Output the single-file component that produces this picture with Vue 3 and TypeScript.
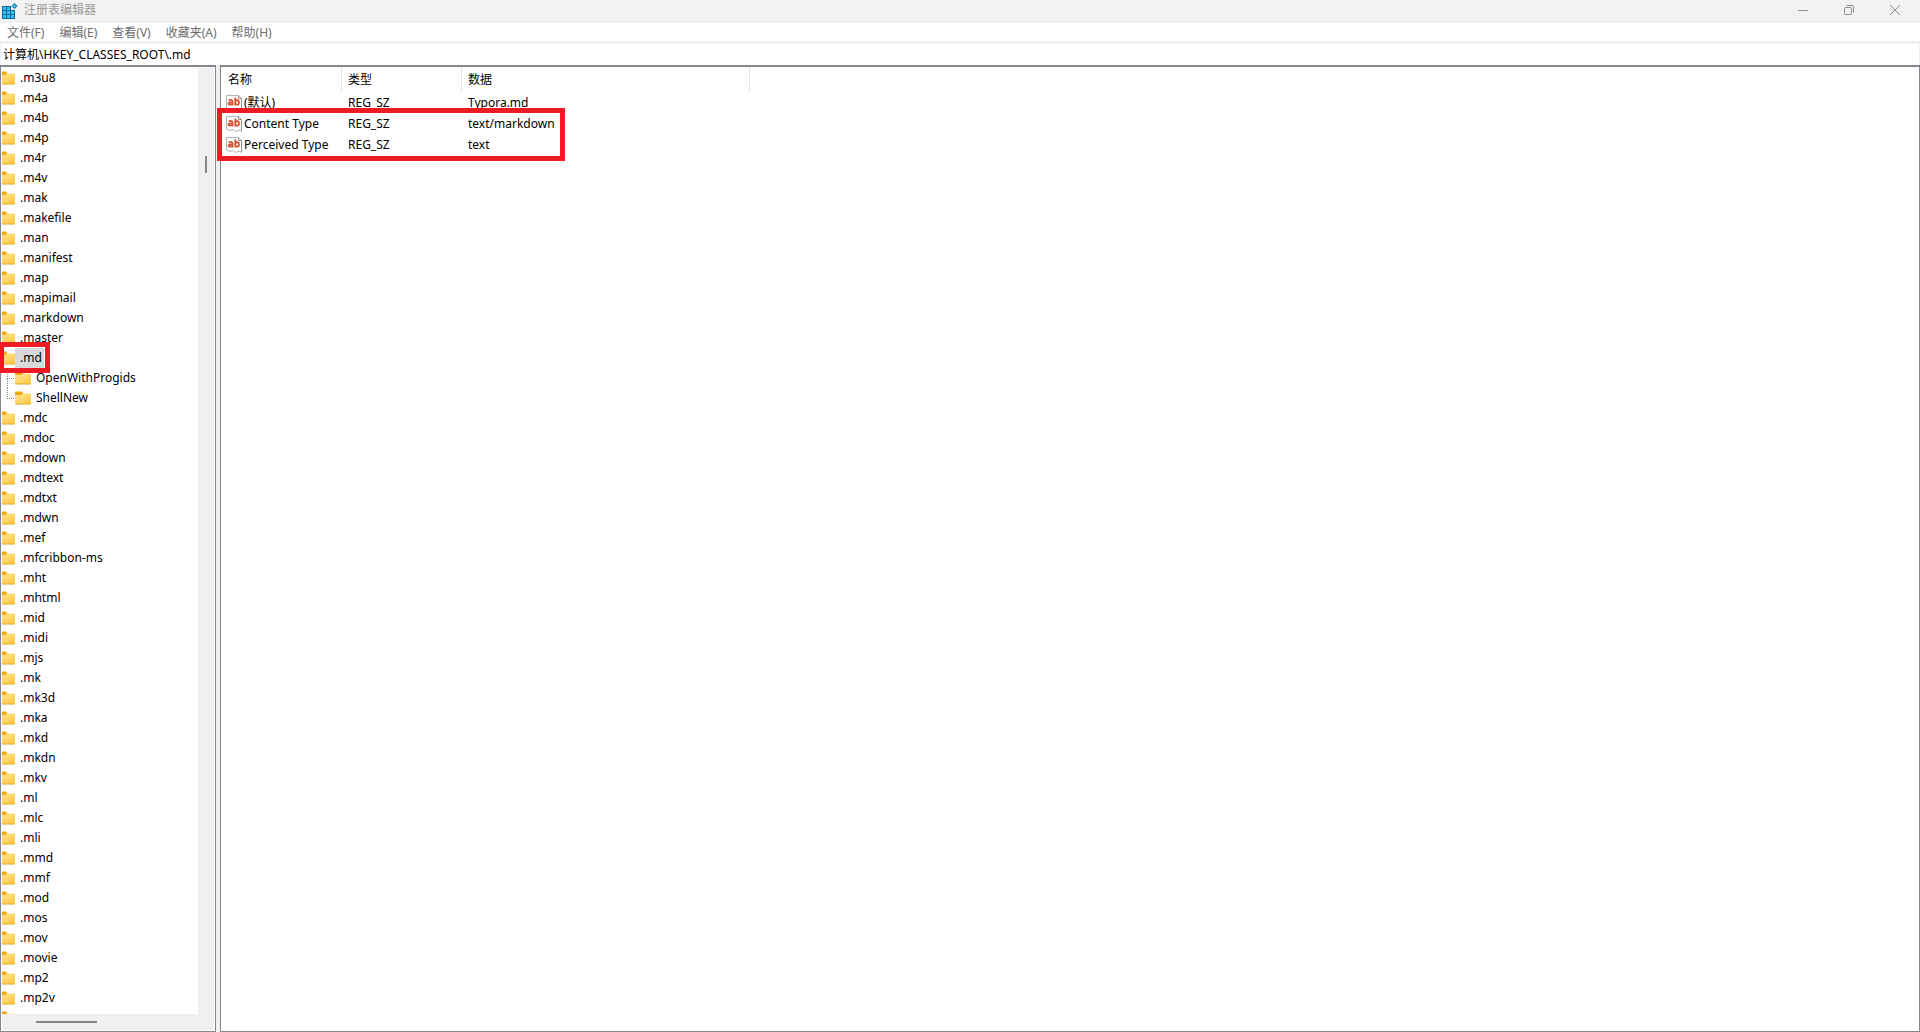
<script setup lang="ts">
import { ref } from 'vue'

interface TreeKey {
  name: string
  children?: string[]
}

interface RegValue {
  name: string
  type: string
  data: string
}

const title = '注册表编辑器'
const menus = ['文件(F)', '编辑(E)', '查看(V)', '收藏夹(A)', '帮助(H)']
const path = ref('计算机\\HKEY_CLASSES_ROOT\\.md')
const selected = ref('.md')

const names = [
  '.m3u8', '.m4a', '.m4b', '.m4p', '.m4r', '.m4v', '.mak', '.makefile', '.man', '.manifest',
  '.map', '.mapimail', '.markdown', '.master', '.md', '.mdc', '.mdoc', '.mdown', '.mdtext',
  '.mdtxt', '.mdwn', '.mef', '.mfcribbon-ms', '.mht', '.mhtml', '.mid', '.midi', '.mjs', '.mk',
  '.mk3d', '.mka', '.mkd', '.mkdn', '.mkv', '.ml', '.mlc', '.mli', '.mmd', '.mmf', '.mod',
  '.mos', '.mov', '.movie', '.mp2', '.mp2v',
]
const keys: TreeKey[] = names.map((name) =>
  name === '.md' ? { name, children: ['OpenWithProgids', 'ShellNew'] } : { name },
)

const columns = ['名称', '类型', '数据']
const values: RegValue[] = [
  { name: '(默认)', type: 'REG_SZ', data: 'Typora.md' },
  { name: 'Content Type', type: 'REG_SZ', data: 'text/markdown' },
  { name: 'Perceived Type', type: 'REG_SZ', data: 'text' },
]
</script>

<template>
  <div class="window">
    <svg class="defs" width="0" height="0" aria-hidden="true">
      <defs>
        <linearGradient id="folder-fill" x1="0" y1="0" x2="1" y2="1">
          <stop offset="0" stop-color="#ffe59a" />
          <stop offset="1" stop-color="#ffc93c" />
        </linearGradient>
        <symbol id="folder" viewBox="0 0 16 14">
          <path d="M0 1.5Q0 .5 1 .5H7L8 1.5V5H0Z" fill="#f0a90c" />
          <path d="M0 4H6L8 2.5H15Q16 2.5 16 3.5V13H0Z" fill="url(#folder-fill)" />
          <path d="M0 12.5H16Q16 13.5 15 13.5H1Q0 13.5 0 12.5Z" fill="#e9a520" />
        </symbol>
      </defs>
    </svg>

    <header class="titlebar">
      <svg class="app-icon" viewBox="0 0 16 16" aria-hidden="true">
        <path d="M0 3H9V7H13V16H0Z" fill="#0b6a9e" />
        <path d="M1 4H4V7H1ZM5 4H8V7H5ZM1 8H4V11H1ZM5 8H8V11H5ZM9 8H12V11H9ZM1 12H4V15H1ZM5 12H8V15H5ZM9 12H12V15H9Z" fill="#35bdf0" />
        <path d="M12.500 0L15.500 3L12.500 6L9.500 3Z" fill="#0f7fb8" />
        <path d="M12.500 1.500L14 3L12.500 4.500L11 3Z" fill="#4fc8f2" />
      </svg>
      <h1>{{ title }}</h1>
      <div class="controls">
        <button type="button" aria-label="最小化">
          <svg viewBox="0 0 10 10"><path d="M0 5.5H10" /></svg>
        </button>
        <button type="button" aria-label="还原">
          <svg viewBox="0 0 10 10">
            <rect x=".5" y="2.500" width="7" height="7" rx="1" />
            <path d="M2.500 .5H8Q9.500 .5 9.500 2V7.500" />
          </svg>
        </button>
        <button type="button" aria-label="关闭">
          <svg viewBox="0 0 10 10"><path d="M0 0L10 10M10 0L0 10" /></svg>
        </button>
      </div>
    </header>

    <nav class="menubar">
      <button v-for="menu in menus" :key="menu" type="button">{{ menu }}</button>
    </nav>

    <div class="address">
      <input v-model="path" type="text" aria-label="地址" spellcheck="false" />
    </div>

    <main class="panes">
      <section class="tree-pane">
        <div class="tree-row">
          <ul class="tree">
            <li v-for="key in keys" :key="key.name">
              <div class="key" @click="selected = key.name">
                <svg class="folder-cut" viewBox="3 0 13 14" aria-hidden="true">
                  <use href="#folder" width="16" height="14" />
                </svg>
                <span class="label" :class="{ selected: key.name === selected }">{{ key.name }}</span>
                <span v-if="key.children" class="key-mark"></span>
              </div>
              <ul v-if="key.children" class="subtree">
                <li v-for="child in key.children" :key="child" class="key child">
                  <svg class="folder-full" viewBox="0 0 16 14" aria-hidden="true">
                    <use href="#folder" width="16" height="14" />
                  </svg>
                  <span class="label">{{ child }}</span>
                </li>
              </ul>
            </li>
            <li class="key" aria-hidden="true">
              <svg class="folder-cut" viewBox="3 0 13 14">
                <use href="#folder" width="16" height="14" />
              </svg>
            </li>
          </ul>
          <div class="vscroll"><span class="thumb"></span></div>
        </div>
        <div class="hscroll"><span class="thumb"></span></div>
      </section>

      <section class="values-pane">
        <table>
          <thead>
            <tr>
              <th v-for="column in columns" :key="column" scope="col">{{ column }}</th>
            </tr>
          </thead>
          <tbody>
            <tr v-for="value in values" :key="value.name">
              <td>
                <span class="value-name">
                  <svg class="value-icon" viewBox="0 0 16 16" aria-hidden="true">
                    <path d="M.5 .5H12.500L15.500 3.500V15.500L13 14L10 15.500L7 13.500L4 14.500L.5 13Z" fill="#fff" stroke="#b4b4b4" />
                    <path d="M12.500 .5V3.500H15.500V15" fill="none" stroke="#909090" />
                    <g fill="none" stroke="#d4512b" stroke-width="1.800">
                      <path d="M2.500 5.500Q6.500 4 6.500 6.500V10.500M6.500 7.500Q2.500 7.200 2.500 8.800Q3 10.500 6.500 9" />
                      <path d="M9.300 2.500V10.500M9.300 6Q13 4 13 7.300Q13 11 9.300 9" />
                    </g>
                  </svg>
                  {{ value.name }}
                </span>
              </td>
              <td>{{ value.type }}</td>
              <td>{{ value.data }}</td>
            </tr>
          </tbody>
        </table>
        <span class="values-mark"></span>
      </section>
    </main>
  </div>
</template>

<style>
html,
body {
  margin: 0;
  background: #fff;
}
</style>

<style scoped>
.window {
  display: flex;
  flex-direction: column;
  height: 100vh;
  overflow: hidden;
  background: #f0f0f0;
  color: #000;
  font: 12px/20px "Noto Sans", "Noto Sans CJK SC", sans-serif;
}

.defs {
  position: absolute;
}

button {
  border: 0;
  background: none;
  font: inherit;
}

ul {
  margin: 0;
  padding: 0;
  list-style: none;
}

.titlebar {
  display: flex;
  align-items: flex-start;
  flex: none;
  height: 23px;
  padding-right: 2px;
  background: #f2f2f2;
  box-sizing: border-box;
}

.app-icon {
  width: 16px;
  height: 16px;
  margin: 3px 6px 0 2px;
}

h1 {
  flex: 1;
  margin: 0;
  font-size: 12px;
  font-weight: 400;
  line-height: 20px;
  color: #999;
}

.controls {
  display: flex;
  height: 20px;
}

.controls button {
  display: grid;
  place-items: center;
  width: 46px;
  padding: 0;
}

.controls svg {
  width: 10px;
  height: 10px;
  overflow: visible;
  fill: none;
  stroke: #8c8c8c;
}

.menubar {
  display: flex;
  flex: none;
  gap: 15px;
  height: 18px;
  padding-left: 7px;
  background: #fff;
}

.menubar button {
  padding: 0;
  line-height: 20px;
  color: #6d6d6d;
}

.address {
  flex: none;
  padding: 3px 1px 0;
}

.address input {
  display: block;
  box-sizing: border-box;
  width: 100%;
  height: 21px;
  padding: 0 2px 2px;
  border: 0;
  background: #fff;
  color: #000;
  font: inherit;
  outline: 0;
}

.panes {
  display: flex;
  flex: 1;
  gap: 4px;
  min-height: 0;
}

.tree-pane,
.values-pane {
  border: 1px solid #828790;
  border-top-width: 2px;
  background: #fff;
}

.tree-pane {
  display: flex;
  flex-direction: column;
  box-sizing: border-box;
  flex: none;
  width: 216px;
  padding: 1px;
}

.tree-row {
  display: flex;
  flex: 1;
  min-height: 0;
}

.tree {
  flex: 1;
  overflow-x: visible;
  overflow-y: clip;
}

.key {
  display: flex;
  align-items: center;
  position: relative;
  height: 20px;
}

.folder-cut {
  width: 13px;
  height: 14px;
}

.folder-full {
  width: 16px;
  height: 14px;
}

.label {
  padding: 0 2px 0 5px;
}

.selected {
  background: #d9d9d9;
}

.key-mark {
  position: absolute;
  top: -6px;
  left: -3px;
  box-sizing: border-box;
  width: 51px;
  height: 31px;
  border: 5px solid #ed1c24;
  z-index: 1;
}

.child {
  padding-left: 13px;
}

.child::before {
  content: "";
  position: absolute;
  top: 0;
  left: 5px;
  width: 6px;
  height: 10px;
  border-left: 1px dotted #909090;
  border-bottom: 1px dotted #909090;
}

.child:not(:last-child)::after {
  content: "";
  position: absolute;
  top: 10px;
  left: 5px;
  height: 10px;
  border-left: 1px dotted #909090;
}

.vscroll {
  width: 16px;
  background: #f0f0f0;
}

.vscroll .thumb {
  display: block;
  width: 2px;
  height: 17px;
  margin: 88px 0 0 7px;
  background: #868686;
}

.hscroll {
  flex: none;
  height: 16px;
  background: #f0f0f0;
}

.hscroll .thumb {
  display: block;
  width: 61px;
  height: 2px;
  margin: 7px 0 0 34px;
  background: #868686;
}

.values-pane {
  position: relative;
  flex: 1;
}

table {
  width: 529px;
  table-layout: fixed;
  border-collapse: separate;
  border-spacing: 0;
}

th {
  box-sizing: border-box;
  height: 25px;
  padding: 0 6px;
  border-right: 1px solid #e5e5e5;
  font-weight: 400;
  text-align: left;
}

th:nth-child(1) {
  width: 121px;
  padding-left: 7px;
}

th:nth-child(2) {
  width: 120px;
}

td {
  height: 21px;
  padding: 0 6px;
  line-height: 20px;
  white-space: nowrap;
}

.value-name {
  display: flex;
  align-items: center;
  gap: 2px;
}

td:first-child {
  padding: 0 0 0 5px;
}

.value-icon {
  width: 16px;
  height: 16px;
}

.values-mark {
  position: absolute;
  top: 41px;
  left: -4px;
  box-sizing: border-box;
  width: 348px;
  height: 53px;
  border: 5px solid #ed1c24;
}
</style>
